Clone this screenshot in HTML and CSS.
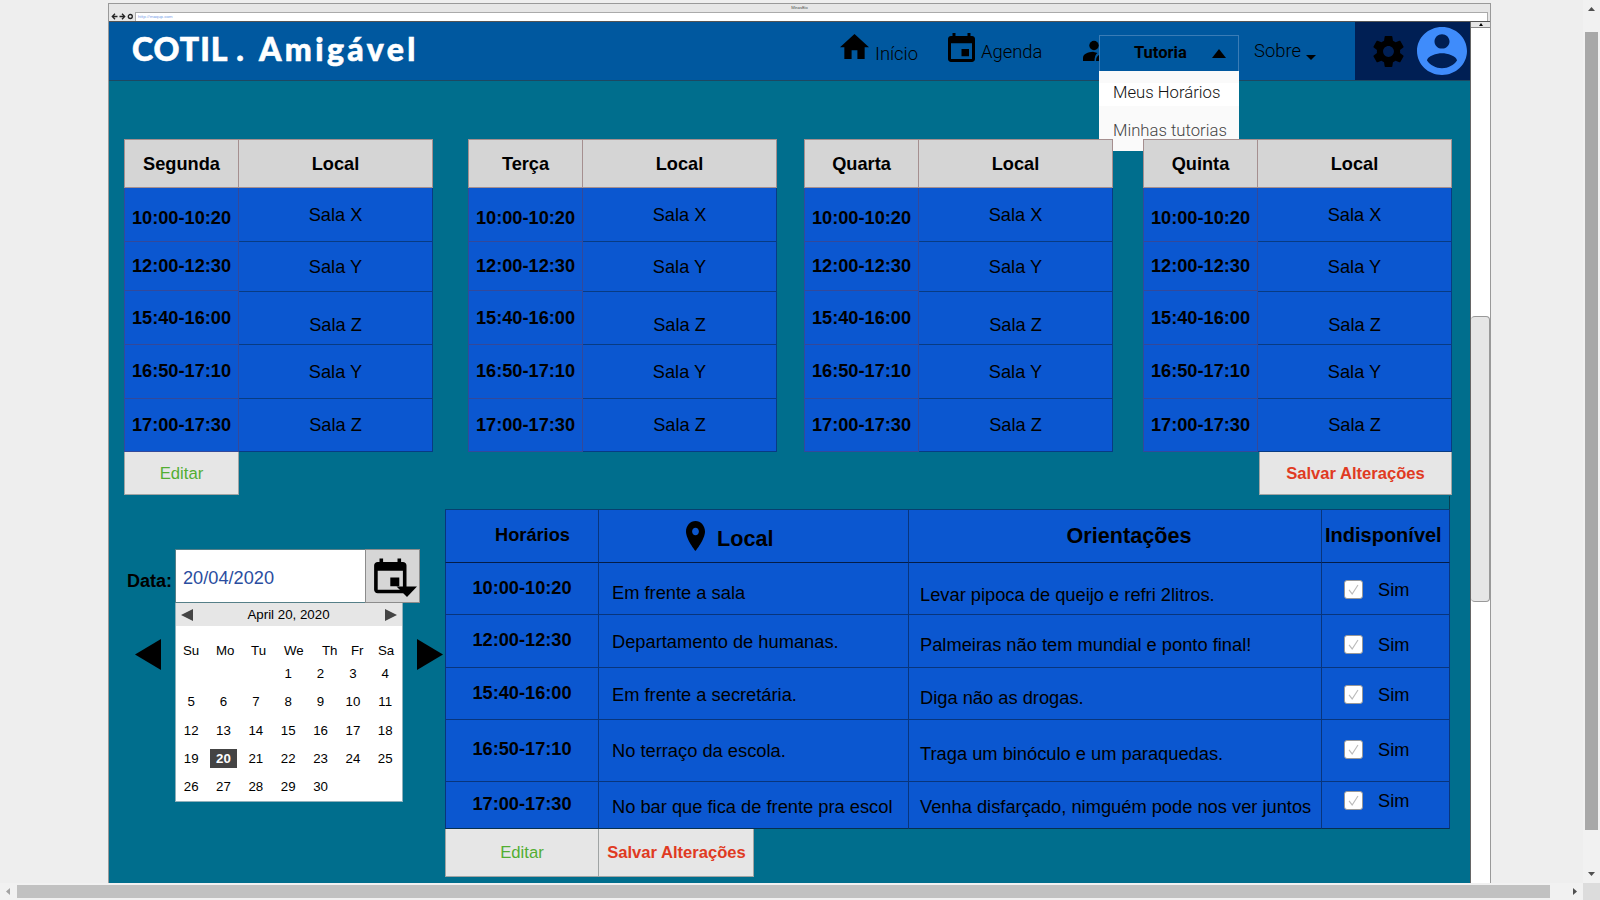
FILE: index.html
```
<!DOCTYPE html>
<html lang="pt-BR">
<head>
<meta charset="utf-8">
<title>COTIL . Amigável</title>
<link rel="stylesheet" href="styles.css">
</head>
<body>
<div class="viewport">
  <div class="browser">
    <div class="titlebar">MinasBio</div>
    <div class="urlbar">
      <svg class="nav-icons" viewBox="0 0 26 9"><g fill="none" stroke="#222" stroke-width="1.300"><path d="M8.500 4.500H3.500M6 1.800L3.300 4.500L6 7.200"/><path d="M10.500 4.500H15.500M13 1.800L15.700 4.500L13 7.200"/><circle cx="21.300" cy="4.500" r="2"/></g></svg>
      <div class="url">http://maqup.com</div>
    </div>
    <div class="frame">
      <div class="page">
        <header class="topbar">
          <div class="logo"><span class="logo-a">COTIL .</span><span class="logo-b">Amigável</span></div>
          <svg class="ic-home" viewBox="2 3 20 17" preserveAspectRatio="none"><path d="M10 20v-6h4v6h5v-8h3L12 3 2 12h3v8z"/></svg>
          <span class="nav nav-inicio">Início</span>
          <svg class="ic-cal" viewBox="3 1 18 20" preserveAspectRatio="none"><path d="M17 12h-5v5h5v-5zM16 1v2H8V1H6v2H5c-1.110 0-1.990.9-1.990 2L3 19c0 1.100.89 2 2 2h14c1.100 0 2-.9 2-2V5c0-1.100-.9-2-2-2h-1V1h-2zm3 18H5V8h14v11z"/></svg>
          <span class="nav nav-agenda">Agenda</span>
          <svg class="ic-person" viewBox="0 0 17 22"><circle cx="11" cy="5.500" r="4.700"/><path d="M0 21v-3c0-4 5-6 10-6.200L14.500 13c-2 1.500-3 4-3 8zM13 21c0-3 1-5.500 4-6.500V21z"/></svg>
          <span class="nav nav-sobre">Sobre</span>
          <svg class="ic-down" viewBox="0 0 10 5"><path d="M0 0h10L5 5z"/></svg>
          <div class="user">
            <svg class="ic-gear" viewBox="2 2 20 20" preserveAspectRatio="none"><path d="M19.430 12.980c.04-.32.07-.64.07-.98s-.03-.66-.07-.98l2.110-1.650c.19-.15.24-.42.12-.64l-2-3.460c-.12-.22-.39-.3-.61-.22l-2.490 1c-.52-.4-1.080-.73-1.690-.98l-.38-2.650C14.460 2.180 14.250 2 14 2h-4c-.25 0-.46.18-.49.42l-.38 2.650c-.61.25-1.170.59-1.690.98l-2.490-1c-.23-.09-.49 0-.61.22l-2 3.460c-.13.22-.07.49.12.64l2.110 1.650c-.04.32-.07.65-.07.98s.03.66.07.98l-2.110 1.650c-.19.15-.24.42-.12.64l2 3.460c.12.22.39.3.61.22l2.490-1c.52.4 1.080.73 1.690.98l.38 2.650c.03.24.24.42.49.42h4c.25 0 .46-.18.49-.42l.38-2.650c.61-.25 1.170-.59 1.690-.98l2.490 1c.23.09.49 0 .61-.22l2-3.460c.12-.22.07-.49-.12-.64l-2.110-1.650zM12 15.500c-1.930 0-3.500-1.570-3.500-3.500s1.570-3.500 3.500-3.500 3.500 1.570 3.500 3.500-1.570 3.500-3.500 3.500z"/></svg>
            <svg class="ic-avatar" viewBox="2 2 20 20" preserveAspectRatio="none"><path d="M12 2C6.480 2 2 6.480 2 12s4.480 10 10 10 10-4.480 10-10S17.520 2 12 2zm0 3c1.660 0 3 1.340 3 3s-1.340 3-3 3-3-1.340-3-3 1.340-3 3-3zm0 14.200c-2.500 0-4.710-1.280-6-3.220.03-1.990 4-3.080 6-3.080 1.990 0 5.970 1.090 6 3.080-1.290 1.940-3.500 3.220-6 3.220z"/></svg>
          </div>
          <div class="dropdown">
            <div class="dd-head"><span>Tutoria</span><svg viewBox="0 0 14 9"><path d="M0 9h14L7 0z"/></svg></div>
            <div class="dd-item dd-one">Meus Horários</div>
            <div class="dd-item dd-two">Minhas tutorias</div>
          </div>
        </header>

        <section class="week">
          <div class="day">
            <div class="hours"><div>Segunda</div><div>10:00-10:20</div><div>12:00-12:30</div><div>15:40-16:00</div><div>16:50-17:10</div><div>17:00-17:30</div></div>
            <div class="rooms"><div>Local</div><div>Sala X</div><div>Sala Y</div><div>Sala Z</div><div>Sala Y</div><div>Sala Z</div></div>
          </div>
          <div class="day">
            <div class="hours"><div>Terça</div><div>10:00-10:20</div><div>12:00-12:30</div><div>15:40-16:00</div><div>16:50-17:10</div><div>17:00-17:30</div></div>
            <div class="rooms"><div>Local</div><div>Sala X</div><div>Sala Y</div><div>Sala Z</div><div>Sala Y</div><div>Sala Z</div></div>
          </div>
          <div class="day">
            <div class="hours"><div>Quarta</div><div>10:00-10:20</div><div>12:00-12:30</div><div>15:40-16:00</div><div>16:50-17:10</div><div>17:00-17:30</div></div>
            <div class="rooms"><div>Local</div><div>Sala X</div><div>Sala Y</div><div>Sala Z</div><div>Sala Y</div><div>Sala Z</div></div>
          </div>
          <div class="day">
            <div class="hours"><div>Quinta</div><div>10:00-10:20</div><div>12:00-12:30</div><div>15:40-16:00</div><div>16:50-17:10</div><div>17:00-17:30</div></div>
            <div class="rooms"><div>Local</div><div>Sala X</div><div>Sala Y</div><div>Sala Z</div><div>Sala Y</div><div>Sala Z</div></div>
          </div>
        </section>
        <div class="week-actions">
          <div class="btn edit top-edit">Editar</div>
          <div class="btn save top-save">Salvar Alterações</div>
        </div>

        <section class="lower">
          <div class="date-panel">
            <div class="date-row">
              <span class="date-label">Data:</span>
              <div class="date-input">20/04/2020</div>
              <div class="date-btn">
                <svg viewBox="0 0 55 54"><path transform="translate(3.700 7.800) scale(1.800 1.730)" d="M17 12h-5v5h5v-5zM16 1v2H8V1H6v2H5c-1.110 0-1.990.9-1.990 2L3 19c0 1.100.89 2 2 2h14c1.100 0 2-.9 2-2V5c0-1.100-.9-2-2-2h-1V1h-2zm3 18H5V8h14v11z"/><path d="M31.500 37.500H52L42 48z"/></svg>
              </div>
            </div>
            <div class="cal-row">
              <svg class="arrow" viewBox="0 0 26 31"><path d="M26 0v31L0 15.500z"/></svg>
              <div class="calendar">
                <div class="cal-head"><svg viewBox="0 0 12 12"><path d="M12 0v12L0 6z"/></svg><span>April 20, 2020</span><svg viewBox="0 0 12 12"><path d="M0 0v12l12-6z"/></svg></div>
                <div class="weekdays"><span>Su</span><span>Mo</span><span>Tu</span><span>We</span><span>Th</span><span>Fr</span><span>Sa</span></div>
                <div class="days">
                  <span></span><span></span><span></span><span>1</span><span>2</span><span>3</span><span>4</span>
                  <span>5</span><span>6</span><span>7</span><span>8</span><span>9</span><span>10</span><span>11</span>
                  <span>12</span><span>13</span><span>14</span><span>15</span><span>16</span><span>17</span><span>18</span>
                  <span>19</span><span class="sel">20</span><span>21</span><span>22</span><span>23</span><span>24</span><span>25</span>
                  <span>26</span><span>27</span><span>28</span><span>29</span><span>30</span>
                </div>
              </div>
              <svg class="arrow arrow-next" viewBox="0 0 26 31"><path d="M0 0v31l26-15.500z"/></svg>
            </div>
          </div>

          <div class="detail">
            <div class="grid">
              <div class="col c-time"><div>Horários</div><div>10:00-10:20</div><div>12:00-12:30</div><div>15:40-16:00</div><div>16:50-17:10</div><div>17:00-17:30</div></div>
              <div class="col c-local"><div><svg class="pin" viewBox="5 2 14 20" preserveAspectRatio="none"><path d="M12 2C8.130 2 5 5.130 5 9c0 5.250 7 13 7 13s7-7.750 7-13c0-3.870-3.130-7-7-7zm0 9.500c-1.380 0-2.500-1.120-2.500-2.500s1.120-2.500 2.500-2.500 2.500 1.120 2.500 2.500-1.120 2.500-2.500 2.500z"/></svg><b>Local</b></div><div>Em frente a sala</div><div>Departamento de humanas.</div><div>Em frente a secretária.</div><div>No terraço da escola.</div><div>No bar que fica de frente pra escol</div></div>
              <div class="col c-note"><div>Orientações</div><div>Levar pipoca de queijo e refri 2litros.</div><div>Palmeiras não tem mundial e ponto final!</div><div>Diga não as drogas.</div><div>Traga um binóculo e um paraquedas.</div><div>Venha disfarçado, nimguém pode nos ver juntos</div></div>
              <div class="col c-off">
                <div>Indisponível</div>
                <div><svg class="check" viewBox="0 0 19 19"><path d="M4.500 10l3.500 4.500 6.500-10"/></svg><span>Sim</span></div>
                <div><svg class="check" viewBox="0 0 19 19"><path d="M4.500 10l3.500 4.500 6.500-10"/></svg><span>Sim</span></div>
                <div><svg class="check" viewBox="0 0 19 19"><path d="M4.500 10l3.500 4.500 6.500-10"/></svg><span>Sim</span></div>
                <div><svg class="check" viewBox="0 0 19 19"><path d="M4.500 10l3.500 4.500 6.500-10"/></svg><span>Sim</span></div>
                <div><svg class="check" viewBox="0 0 19 19"><path d="M4.500 10l3.500 4.500 6.500-10"/></svg><span>Sim</span></div>
              </div>
            </div>
            <div class="detail-actions">
              <div class="btn edit">Editar</div>
              <div class="btn save">Salvar Alterações</div>
            </div>
          </div>
          <div class="edge"></div>
        </section>
      </div>
      <div class="inner-scroll">
        <div class="inner-up"><svg viewBox="0 0 4 3"><path d="M0 3h4L2 0z"/></svg></div>
        <div class="inner-thumb"></div>
      </div>
    </div>
  </div>
</div>
<div class="vscroll"><svg viewBox="0 0 7 4"><path d="M0 4h7L3.500 0z"/></svg><div class="vthumb"></div><svg class="v-down" viewBox="0 0 7 4"><path d="M0 0h7L3.500 4z"/></svg></div>
<div class="hscroll"><svg class="h-left" viewBox="0 0 4 7"><path d="M4 0v7L0 3.500z"/></svg><div class="hthumb"></div><svg class="h-right" viewBox="0 0 4 7"><path d="M0 0v7l4-3.500z"/></svg></div>
<div class="corner"></div>
</body>
</html>
```
FILE: styles.css
```
* { box-sizing: border-box; }
body {
  margin: 0;
  width: 1600px;
  height: 900px;
  overflow: hidden;
  display: grid;
  grid-template: 883px 17px / 1583px 17px;
  background: #eee;
  color: #000;
  font: 18.200px/20px "Liberation Sans", Arial, sans-serif;
  white-space: nowrap;
}
svg { display: block; flex: none; }

/* outer window */
.viewport { overflow: hidden; padding: 3px 0 0 108px; }
.browser { width: 1383px; height: 880px; border: 1px solid #999; border-bottom: 0; background: #e6e6e6; display: flex; flex-direction: column; }
.titlebar { height: 8px; font: 4px/8px Roboto, sans-serif; text-align: center; color: #555; }
.urlbar { height: 10px; display: flex; border-bottom: 1px solid #555; }
.nav-icons { width: 26px; height: 9px; }
.url { flex: none; width: 1353px; background: #fff; border: 1px solid #aaa; border-bottom: 0; font: 4.300px/7px Roboto, sans-serif; color: #78a0e8; padding-left: 2px; }
.frame { flex: 1; display: flex; min-height: 0; }
.page { width: 1361px; background: #006e8d; overflow: hidden; }
.inner-scroll { width: 20px; background: #fff; border-left: 1px solid #666; }
.inner-up { height: 6px; background: #e6e6e6; border-bottom: 1px solid #888; }
.inner-up svg { width: 4px; height: 3px; margin: 0 auto; transform: translateY(1px); }
.inner-thumb { margin-top: 288px; height: 286px; background: #e6e6e6; border: 1px solid #999; border-left: 0; border-radius: 4px; }

/* top bar */
.topbar { position: relative; height: 59px; background: #00589f; border-bottom: 1px solid #1d4862; display: flex; align-items: flex-start; }
.logo { width: 731px; padding: 7px 0 0 23px; display: flex; color: #fff; font: 900 32px/40px Lato, sans-serif; }
.logo-a { width: 127px; letter-spacing: 1px; -webkit-text-stroke: 0.600px #fff; }
.logo-b { letter-spacing: 3.400px; -webkit-text-stroke: 0.600px #fff; }
.nav { font: 300 18.400px/20px Roboto, sans-serif; color: #000; }
.ic-home { width: 29px; height: 25px; margin-top: 12px; }
.nav-inicio { width: 71px; padding-left: 6px; margin-top: 22px; }
.ic-cal { width: 27px; height: 29px; margin: 11px 0 0 8px; }
.nav-agenda { width: 108px; padding-left: 6px; margin-top: 20px; }
.ic-person { width: 17px; height: 22px; margin-top: 18px; }
.nav-sobre { width: 52px; margin: 19px 0 0 154px; }
.ic-down { width: 10px; height: 5px; margin-top: 33px; }
.user { width: 115px; height: 58px; margin-left: auto; background: #001f54; display: flex; padding: 5px 0 0 18px; }
.ic-gear { width: 31px; height: 31px; margin-top: 9px; }
.ic-avatar { width: 50px; height: 48px; margin-left: 13px; fill: #3f8cfb; }
.dropdown { position: absolute; z-index: 1; left: 990px; top: 13px; width: 140px; height: 116px; background: #fafafa; }
.dd-head { height: 36px; background: #00589f; border: 1px solid #3a7cb6; border-bottom: 0; display: flex; font: 700 16.500px/20px Roboto, sans-serif; padding: 7px 0 0 34px; }
.dd-head span { width: 78px; }
.dd-head svg { width: 14px; height: 9px; margin-top: 6px; }
.dd-item { font: 300 16.700px/20px Roboto, sans-serif; padding-left: 14px; color: #111; }
.dd-one { margin-top: 12px; height: 23px; background: #fff; }
.dd-two { margin-top: 15px; color: #444; }

/* weekly tables */
.week { position: relative; z-index: 2; display: flex; padding: 58px 0 0 15px; }
.day { display: flex; width: 309px; margin-right: 35px; text-align: center; }
.day:nth-child(2) { margin-right: 27px; }
.day:nth-child(3) { margin-right: 30px; }
.day > div > div { background: #0b57d0; border: 0 solid #33499a; }
.hours { width: 115px; font-weight: 700; }
.rooms { width: 194px; }
.hours > div { border-width: 0 1px 1px !important; }
.rooms > div { border-color: #083b83 !important; border-width: 0 1px 1px 0 !important; }
.hours > div:nth-child(1), .rooms > div:nth-child(1) { height: 49px; padding-top: 14px; font-weight: 700; background: #d5d5d5; border: 1px solid #a58f8f !important; }
.rooms > div:nth-child(1) { border-left: 0 !important; }
.hours > div:nth-child(2) { height: 54px; padding-top: 20px; }
.hours > div:nth-child(3) { height: 49px; padding-top: 14px; }
.hours > div:nth-child(4) { height: 54px; padding-top: 17px; }
.hours > div:nth-child(5) { height: 54px; padding-top: 16px; }
.hours > div:nth-child(6) { height: 53px; padding-top: 16px; }
.rooms > div:nth-child(2) { height: 54px; padding-top: 17px; }
.rooms > div:nth-child(3) { height: 50px; padding-top: 15px; }
.rooms > div:nth-child(4) { height: 53px; padding-top: 23px; }
.rooms > div:nth-child(5) { height: 54px; padding-top: 17px; }
.rooms > div:nth-child(6) { height: 53px; padding-top: 16px; }
.week-actions { display: flex; justify-content: space-between; padding: 0 18px 0 15px; }
.btn { background: #e6e6e6; border: 1px solid #a0a4a4; border-top: 0; font-size: 16.700px; text-align: center; }
.edit { color: #52ae32; }
.save { color: #e03a22; font-weight: 700; font-size: 16.600px; }
.top-edit, .top-save { height: 43px; padding-top: 12px; }
.top-edit { width: 115px; }
.top-save { width: 193px; }

/* date picker */
.lower { display: flex; padding-top: 14px; }
.date-panel { width: 336px; padding-top: 40px; }
.date-row { display: flex; padding-left: 18px; height: 54px; }
.date-label { width: 48px; font-weight: 700; padding-top: 22px; font-size: 18px; }
.date-input { width: 190px; background: #fff; border: 1px solid #557f88; border-right: 0; padding: 18px 0 0 7px; color: #2a4da0; }
.date-btn { width: 55px; background: #d6d6d6; border: 1px solid #8c8c8c; }
.date-btn svg { width: 55px; height: 54px; margin: -1px; }
.cal-row { display: flex; padding-left: 26px; }
.arrow { width: 26px; height: 31px; margin-top: 36px; }
.arrow-next { margin-left: 14px; }
.calendar { width: 228px; height: 199px; margin-left: 14px; background: #fff; border: 1px solid #8fb0ba; border-top: 0; font-size: 13.300px; line-height: 16px; }
.cal-head { height: 23px; background: #e6e6e6; display: flex; justify-content: space-between; align-items: center; padding: 0 5px; }
.cal-head svg { width: 12px; height: 12px; fill: #444; }
.cal-head span { margin-right: 1px; }
.weekdays { display: grid; grid-template-columns: 33px 35px 33px 38px 29px 27px 20px; padding: 17px 0 0 7px; height: 38px; }
.days { display: grid; grid-template-columns: repeat(7, 32.350px); grid-auto-rows: 28.300px; text-align: center; margin-left: -1px; }
.days span { line-height: 19px; margin: 0 3px; height: 19px; }
.days .sel { background: #444; color: #fff; font-weight: 700; }

/* detail table */
.detail { width: 1005px; }
.grid { display: flex; border-top: 1px solid #073f70; width: 1005px; }
.col > div { background: #0b57d0; border-right: 1px solid #08357c; border-bottom: 1px solid #08357c; padding-left: 13px; }
.col > div:nth-child(1) { height: 53px; font-weight: 700; border-bottom-color: #041d48; }
.col > div:nth-child(2) { height: 52px; }
.col > div:nth-child(3) { height: 53px; }
.col > div:nth-child(4) { height: 52px; }
.col > div:nth-child(5) { height: 62px; }
.col > div:nth-child(6) { height: 47px; border-bottom-color: #06304f; }
.c-time { width: 154px; font-weight: 700; text-align: center; }
.c-time > div { border-left: 1px solid #08357c; padding-left: 0 !important; padding-top: 15px; }
.c-time > div:nth-child(1) { padding-left: 21px !important; }
.c-time > div:nth-child(5) { padding-top: 19px; }
.c-time > div:nth-child(6) { padding-top: 12px; }
.c-local { width: 310px; }
.c-local > div:nth-child(1) { display: flex; padding: 11px 0 0 87px; font-size: 21.600px; line-height: 24px; }
.c-local b { padding: 6px 0 0 12px; }
.pin { width: 19px; height: 30px; }
.c-local > div, .c-note > div { font-size: 18.300px; }
.c-local > div:nth-child(2) { padding-top: 20px; }
.c-local > div:nth-child(3) { padding-top: 17px; }
.c-local > div:nth-child(4) { padding-top: 17px; }
.c-local > div:nth-child(5) { padding-top: 21px; }
.c-local > div:nth-child(6) { padding-top: 15px; }
.c-note { width: 413px; }
.c-note > div { padding-left: 11px; }
.c-note > div:nth-child(1) { text-align: center; padding: 14px 0 0 28px; font-size: 21.600px; line-height: 24px; }
.c-note > div:nth-child(2) { padding-top: 22px; }
.c-note > div:nth-child(3) { padding-top: 20px; }
.c-note > div:nth-child(4) { padding-top: 20px; }
.c-note > div:nth-child(5) { padding-top: 24px; }
.c-note > div:nth-child(6) { padding-top: 15px; }
.c-off { width: 128px; }
.c-off > div { display: flex; padding-left: 22px; }
.c-off > div:nth-child(1) { font-size: 20px; padding: 15px 0 0 3px; }
.c-off > div:nth-child(2) { padding-top: 17px; }
.c-off > div:nth-child(3) { padding-top: 20px; }
.c-off > div:nth-child(4) { padding-top: 17px; }
.c-off > div:nth-child(5) { padding-top: 20px; }
.c-off > div:nth-child(6) { padding-top: 9px; }
.c-off span { padding-left: 15px; }
.check { width: 19px; height: 19px; background: #fff; border: 1px solid #999; border-radius: 3px; fill: none; stroke: #bbb; stroke-width: 1.300; }
.detail-actions { display: flex; }
.detail-actions .btn { width: 154px; height: 48px; padding-top: 14px; }
.detail-actions .save { width: 155px; border-left: 0; padding-left: 1px; }
.edge { width: 1px; height: 13px; margin: -13px 0 0 -1px; background: #073f50; }

/* outer scrollbars */
.vscroll { background: #f1f1f1; padding: 7px 2px 0; }
.vscroll svg { width: 7px; height: 4px; margin: 0 auto; fill: #505050; }
.vthumb { height: 798px; margin-top: 21px; background: #a8a8a8; }
.vscroll .v-down { margin-top: 42px; }
.hscroll { background: #f1f1f1; display: flex; align-items: center; padding-left: 6px; }
.hscroll svg { width: 4px; height: 7px; }
.h-left { fill: #a3a3a3; }
.hthumb { width: 1533px; height: 13px; margin: 0 23px 0 7px; background: #c1c1c1; }
.h-right { fill: #505050; }
.corner { background: #dcdcdc; }
```
